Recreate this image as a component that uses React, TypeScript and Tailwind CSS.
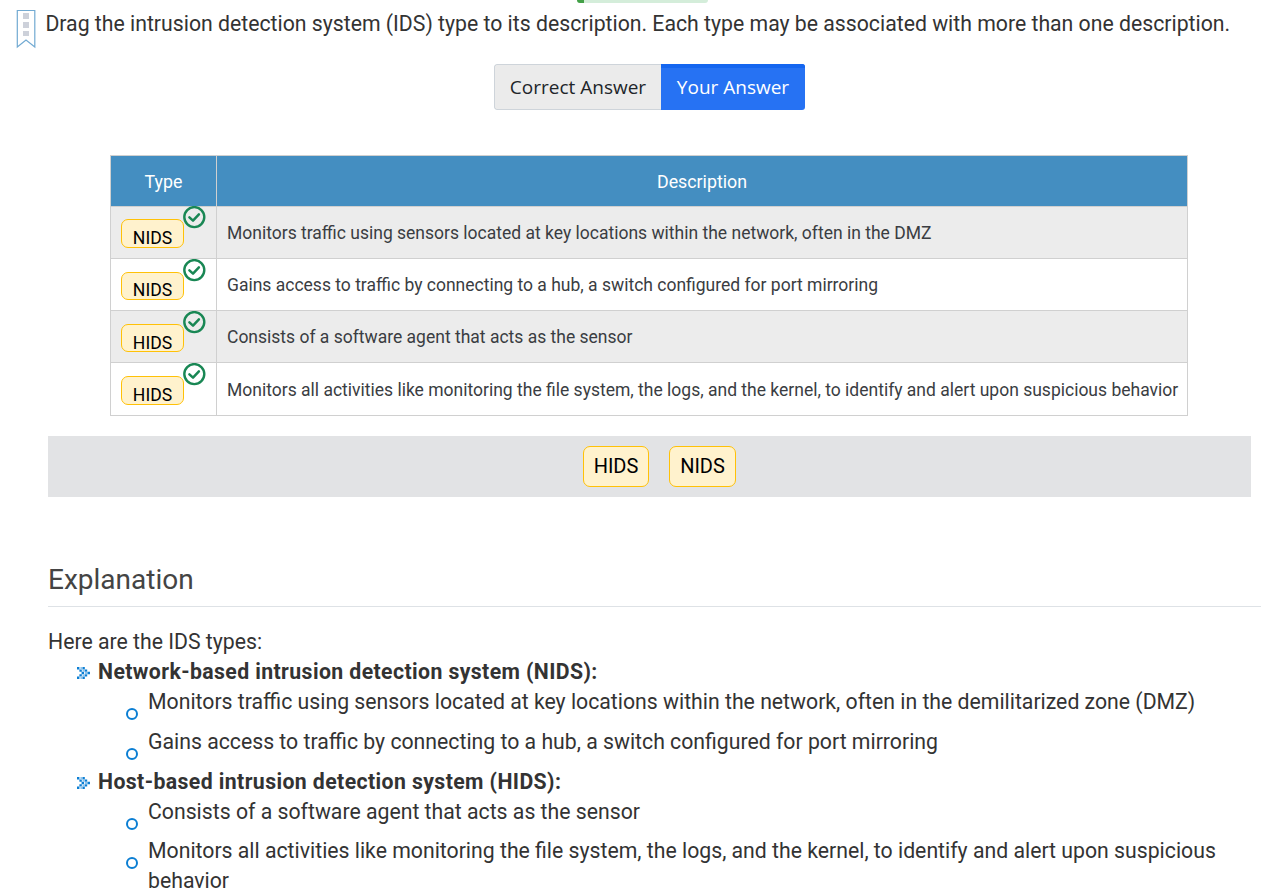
import type { ReactNode } from "react";

const rows = [
  { type: "NIDS", text: "Monitors traffic using sensors located at key locations within the network, often in the DMZ", h: "h-[52px]", pt: "pt-3", chip: "h-[29px] leading-[36px]", textPad: "" },
  { type: "NIDS", text: "Gains access to traffic by connecting to a hub, a switch configured for port mirroring", h: "h-[52px]", pt: "pt-[13px]", chip: "h-[28px] leading-[34px]", textPad: "" },
  { type: "HIDS", text: "Consists of a software agent that acts as the sensor", h: "h-[52px]", pt: "pt-[13px]", chip: "h-[28px] leading-[36px]", textPad: "" },
  { type: "HIDS", text: "Monitors all activities like monitoring the file system, the logs, and the kernel, to identify and alert upon suspicious behavior", h: "h-[53px]", pt: "pt-[13px]", chip: "h-[29px] leading-[36px]", textPad: "pt-[2px]" },
];

function Bookmark() {
  return (
    <svg width="20" height="40" viewBox="0 0 20 40" className="block">
      <path d="M1.3 38V1.5H18.8V38L10 31Z" fill="#fff" stroke="#72aad2" strokeWidth="1.2" />
      <path d="M7 4h6v6H7zM7 13h6v6H7zM7 22h6v5H7z" fill="#cdd1da" />
    </svg>
  );
}

function Check() {
  return (
    <svg width="23" height="23" viewBox="0 0 23 23" className="absolute -top-[14px] left-[61px]">
      <circle cx="11.3" cy="11.1" r="10" fill="none" stroke="#198754" strokeWidth="2.4" />
      <path d="M6.4 11.3L10 14.6L15.9 8.3" fill="none" stroke="#198754" strokeWidth="2.5" strokeLinecap="round" strokeLinejoin="round" />
    </svg>
  );
}

function Chevrons() {
  return (
    <svg width="13" height="12" viewBox="0 0 13 12" className="mt-[10px] block">
      <path d="M0 0h2.4v2.4H0zM2.4 2.4h2.4v2.4H2.4zM4.6 4.8H7v2.4H4.6zM2.4 7.2h2.4v2.4H2.4zM0 9.6h2.4V12H0zM5.4 0h2.4v2.4H5.4zM7.8 2.4h2.4v2.4H7.8zM10.4 4.8H13v2.4h-2.6zM7.8 7.2h2.4v2.4H7.8zM5.4 9.6h2.4V12H5.4z" fill="#0b7ed3" />
      <path d="M3.4 0h2v2.4h-2zM5.6 2.4h2.2v2.4H5.6zM7.8 4.8h2.2v2.4H7.8zM5.6 7.2h2.2v2.4H5.6zM3.4 9.6h2V12h-2z" fill="#8fc4ec" />
    </svg>
  );
}

function Group({ title, children }: { title: string; children: ReactNode }) {
  return (
    <li>
      <div className="flex pl-[29px]">
        <Chevrons />
        <b className="ml-2 font-bold tracking-[0.4px]">{title}</b>
      </div>
      <ul>{children}</ul>
    </li>
  );
}

function Item({ children }: { children: ReactNode }) {
  return (
    <li className="mb-[9.75px] flex items-start pl-[78px]">
      <svg width="12" height="12" viewBox="0 0 12 12" className="mt-[21px] mr-[10px] -mb-3 block shrink-0">
        <circle cx="6" cy="6" r="5" fill="none" stroke="#0b7ed3" strokeWidth="2" />
      </svg>
      <span>{children}</span>
    </li>
  );
}

export default function App() {
  return (
    <div className="h-[896px] w-[1288px] overflow-hidden bg-white font-[Roboto,sans-serif] text-[21.24px] leading-[30px] text-[#333]">
      <div className="ml-[577px] h-[3px] w-[131px] overflow-hidden rounded-b-md bg-[#d4edda]">
        <div className="h-full w-[7px] bg-[#43a047]" />
      </div>
      <header className="flex h-[61px] pt-[6px] pl-4">
        <Bookmark />
        <h1 className="ml-[9.4px] whitespace-nowrap">Drag the intrusion detection system (IDS) type to its description. Each type may be associated with more than one description.</h1>
      </header>

      <div className="ml-[494px] flex h-[46px] w-[311px] overflow-hidden rounded-[3px] font-['Open_Sans',sans-serif] text-[19px] leading-[44px]">
        <button className="w-[167px] rounded-l-[3px] border border-r-0 border-[#ced4da] bg-[#ebebeb] whitespace-nowrap text-[#212529]">Correct Answer</button>
        <button className="w-[144px] border-t-4 border-[#1466f0] bg-[#2672f3] pb-1 leading-[38px] whitespace-nowrap text-white">Your Answer</button>
      </div>

      <table className="mt-[45px] ml-[110px] w-[1078px] table-fixed border-collapse text-[17.5px] text-[#3a3d42]">
        <colgroup>
          <col className="w-[106px]" />
          <col />
        </colgroup>
        <thead>
          <tr className="h-[51px] bg-[#448ec1] text-white">
            <th className="border border-[#d0d0d0] p-0 pt-[2px] text-[17.8px] font-normal">Type</th>
            <th className="border border-[#d0d0d0] p-0 pt-[2px] text-[17.8px] font-normal">Description</th>
          </tr>
        </thead>
        <tbody>
          {rows.map((row) => (
            <tr key={row.text} className={`${row.h} odd:bg-[#ececec]`}>
              <td className={`border border-[#d0d0d0] pl-[10px] align-top ${row.pt}`}>
                <div className={`relative w-[63px] rounded-[7px] border border-[#ffc107] bg-[#fff2cd] text-center text-[17.6px] text-black ${row.chip}`}>
                  {row.type}
                  <Check />
                </div>
              </td>
              <td className={`border border-[#d0d0d0] pl-[10px] whitespace-nowrap ${row.textPad}`}>{row.text}</td>
            </tr>
          ))}
        </tbody>
      </table>

      <div className="mt-5 ml-12 flex h-[61px] w-[1203px] justify-center gap-5 bg-[#e2e3e5] pt-[10px] pl-5 text-[20px] text-black">
        <div className="h-[41px] w-[66px] rounded-[7px] border border-[#ffc107] bg-[#fff2cd] text-center leading-[39px]">HIDS</div>
        <div className="h-[41px] w-[67px] rounded-[7px] border border-[#ffc107] bg-[#fff2cd] text-center leading-[39px]">NIDS</div>
      </div>

      <section className="ml-12">
        <h2 className="mt-[62px] h-[48px] w-[1213px] border-b border-[#dee2e6] text-[28px] leading-[42px] text-[#444]">Explanation</h2>
        <p className="mt-5">Here are the IDS types:</p>
        <ul>
          <Group title="Network-based intrusion detection system (NIDS):">
            <Item>Monitors traffic using sensors located at key locations within the network, often in the demilitarized zone (DMZ)</Item>
            <Item>Gains access to traffic by connecting to a hub, a switch configured for port mirroring</Item>
          </Group>
          <Group title="Host-based intrusion detection system (HIDS):">
            <Item>Consists of a software agent that acts as the sensor</Item>
            <Item>Monitors all activities like monitoring the file system, the logs, and the kernel, to identify and alert upon suspicious<br />behavior</Item>
          </Group>
        </ul>
      </section>
    </div>
  );
}
